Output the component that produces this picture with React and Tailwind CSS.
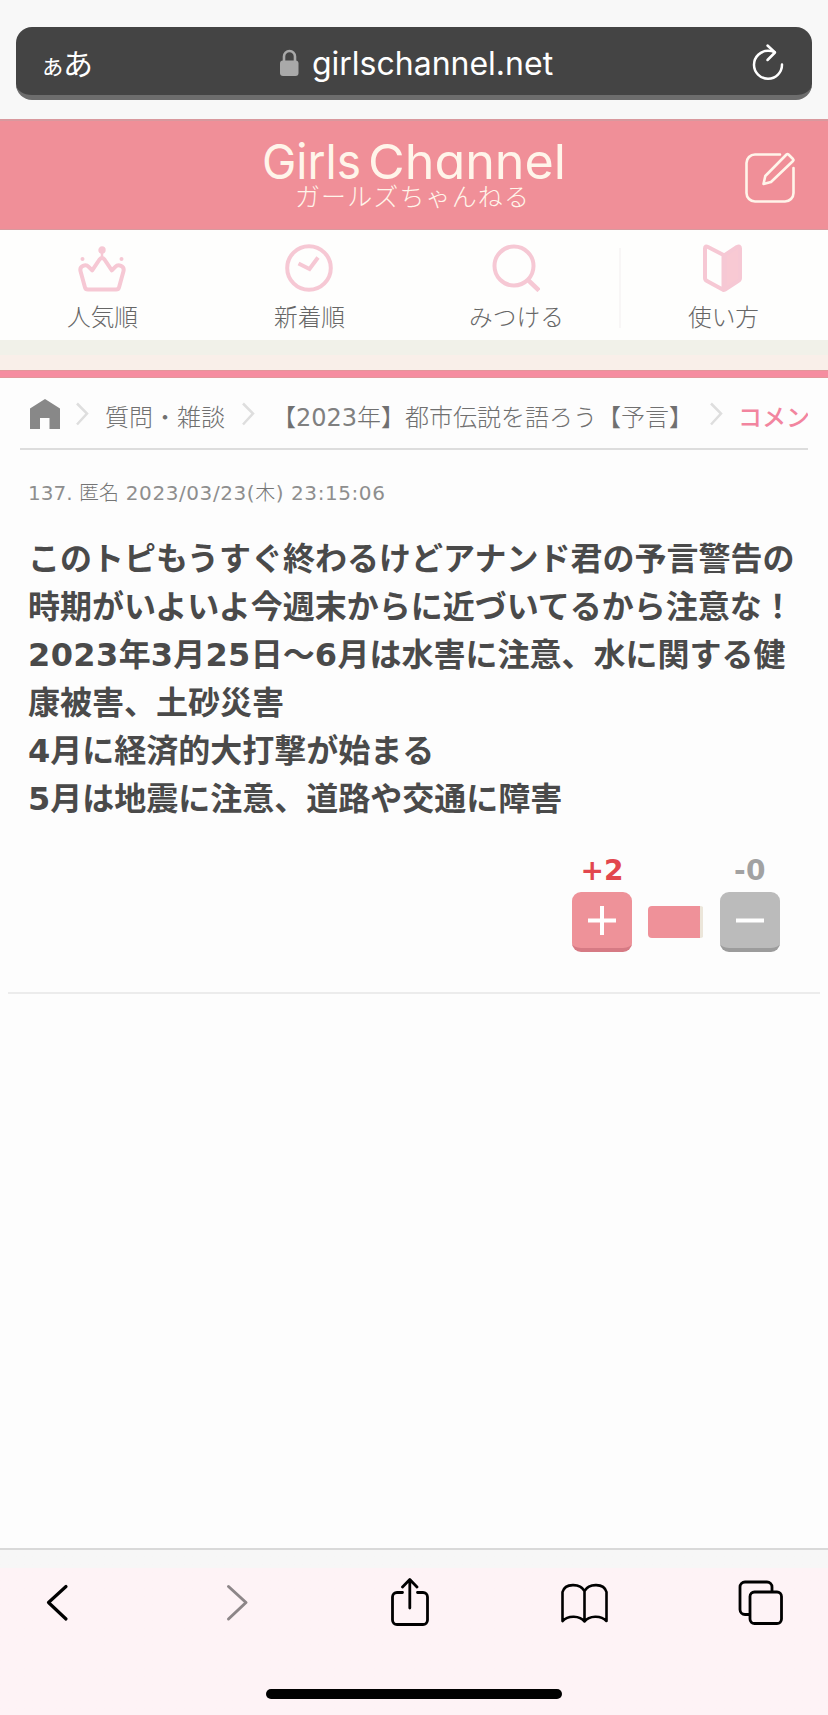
import React from "react";

const JP = "font-['Noto_Sans_CJK_JP',sans-serif]";
const VERDANA = "font-['DejaVu_Sans','Noto_Sans_CJK_JP',sans-serif]";

function AddressBar() {
  return (
    <div className="flex h-[119px] shrink-0 flex-col bg-[#f8f8f8] px-4 pt-[27px]">
      <div className="flex h-[73px] items-center justify-between rounded-2xl border-b-[5px] border-[#6d6d6d] bg-[#444444] pl-[24px] pr-[28px] text-white">
        <div className={`flex w-[120px] items-baseline pt-[2px] leading-none ${JP}`}>
          <span className="text-[25px]">ぁ</span>
          <span className="-ml-[2px] text-[30px]">あ</span>
        </div>
        <div className="flex items-center gap-[13px] pl-[9px] pt-[6px]">
          <svg width="19" height="27" viewBox="0 0 19 27" className="mb-[4px]">
            <path d="M4 13V7.5a5.5 5.5 0 0 1 11 0V13" fill="none" stroke="#a9a9a9" strokeWidth="2.6" />
            <rect x="0" y="11.5" width="18.5" height="15.5" rx="3" fill="#a9a9a9" />
          </svg>
          <span className="font-['Inter',sans-serif] text-[32px] leading-[40px]">girlschannel.net</span>
        </div>
        <div className="flex w-[120px] justify-end pt-[2px]">
          <svg width="32" height="38" viewBox="0 0 32 38" fill="none" stroke="#fff" strokeWidth="2.500" strokeLinecap="round" strokeLinejoin="round">
            <path d="M22.500 9.200C20.500 8.200 18.400 7.800 16.300 7.800A14 14 0 1 0 30 21.600" />
            <path d="M15.500 2.500L23 9.500L15.500 17" />
          </svg>
        </div>
      </div>
    </div>
  );
}

function SiteHeader() {
  return (
    <header className="flex h-[111px] shrink-0 items-start justify-between border-t-2 border-b border-[#d9999e] bg-[#f08f98] pl-[32px] pr-[32px]">
      <div className="w-[51px]" />
      <svg width="310" height="104" viewBox="259 121 310 104" fill="#fff5ea">
        <g fontFamily="Inter, sans-serif" fontSize="48.500" fontWeight="400" style={{ fontFeatureSettings: '"cv11"' }}>
          <text x="262" y="178.500" textLength="99" lengthAdjust="spacingAndGlyphs">Girls</text>
          <text x="368" y="178.500" textLength="198" lengthAdjust="spacingAndGlyphs">Channel</text>
        </g>
        <text x="295" y="206" fontFamily="'Noto Sans CJK JP', sans-serif" fontSize="25" fontWeight="300" textLength="234">
          ガールズちゃんねる
        </text>
      </svg>
      <svg width="51" height="51" viewBox="0 0 51 51" className="mt-[31px]" fill="none" stroke="#fff5ea" strokeWidth="2.600" strokeLinecap="round" strokeLinejoin="round">
        <path d="M35 2.500H10a8.500 8.500 0 0 0-8.500 8.500v30a8.500 8.500 0 0 0 8.500 8.500h30a8.500 8.500 0 0 0 8.500-8.500V16" />
        <path d="M43.500 2.500l4.500 4.500a1.500 1.500 0 0 1 0 2L26 30l-7.500 2 1.800-8L41.500 2.500a1.500 1.500 0 0 1 2 0z" />
      </svg>
    </header>
  );
}

const navItems = [
  {
    label: "人気順",
    icon: (
      <g fill="none" stroke="#f6c8d4" strokeWidth="4" strokeLinejoin="round">
        <path d="M10 45.500Q7.500 45.500 7 43.500L2.600 27.500C1 21.500 8 20 10.700 22.800L14.200 26.300L21.500 15.500Q24 12.500 26.500 15.500L33.800 26.300L37.300 22.800C40 20 47 21.500 45.400 27.500L41 43.500Q40.500 45.500 38 45.500Z" />
        <path d="M24 5v9" strokeWidth="2.500" />
        <circle cx="24" cy="6" r="2" strokeWidth="3.400" />
        <circle cx="4.500" cy="15" r="1" strokeWidth="2" />
        <circle cx="43.500" cy="15" r="1" strokeWidth="2" />
      </g>
    ),
  },
  {
    label: "新着順",
    icon: (
      <g fill="none" stroke="#f6c8d4" strokeWidth="4">
        <circle cx="24" cy="24" r="21.800" />
        <path d="M13.500 19.500L24.500 25L33 13.500" />
      </g>
    ),
  },
  {
    label: "みつける",
    icon: (
      <g fill="none" stroke="#f6c8d4" strokeWidth="4">
        <circle cx="22" cy="22" r="19.500" />
        <path d="M35.500 35.500L47 46.500" strokeWidth="4.500" />
      </g>
    ),
  },
  {
    label: "使い方",
    icon: (
      <g stroke="#f6c8d4" strokeWidth="4" strokeLinejoin="round">
        <path d="M6 4.500Q6 1.500 9 3L24.500 11V46L8 37Q6 36 6 34Z" fill="none" />
        <path d="M41 4.500Q41 1.500 38 3L26 11V45.500L39 37Q41 36 41 34Z" fill="#f8c9d3" />
      </g>
    ),
  },
];

function Nav() {
  return (
    <nav className="grid h-[110px] shrink-0 grid-cols-4 bg-[#fefefd]">
      {navItems.map((item, i) => (
        <div key={item.label} className="flex">
          {i === 3 && <div className="-ml-[2px] mt-[18px] h-[80px] w-[2px] bg-[#f8f6f6]" />}
          <div className="flex flex-1 flex-col items-center pr-[3px] pt-[14px]">
            <svg width="48" height="48" viewBox="0 0 48 48">{item.icon}</svg>
            <span className={`mt-[6px] pl-px text-[23.7px] leading-[36px] font-light text-[#666666] ${JP}`}>{item.label}</span>
          </div>
        </div>
      ))}
    </nav>
  );
}

function Chevron() {
  return (
    <svg width="14" height="26" viewBox="0 0 14 26" className="shrink-0" fill="none" stroke="#dedede" strokeWidth="2.500">
      <path d="M2 2.500L12 12.500L2 23.500" />
    </svg>
  );
}

function Breadcrumb() {
  return (
    <div className={`mx-5 flex h-[72px] shrink-0 items-start overflow-hidden whitespace-nowrap border-b-2 border-[#dddddd] pl-[10px] pt-[20px] text-[24px] leading-[36px] font-light text-[#707070] ${VERDANA}`}>
      <svg width="30" height="30" viewBox="0 0 30 30" className="mt-px shrink-0" fill="#888888">
        <path d="M15 0L30 9.500V30H19.500V19H10V30H0V9.500Z" />
      </svg>
      <div className="ml-[15px] mt-[3px]"><Chevron /></div>
      <span className="ml-[16px] mt-[2px]">質問・雑談</span>
      <div className="ml-[16px] mt-[3px]"><Chevron /></div>
      <span className="ml-[17px] mt-[2px]">【<span className="font-normal text-[#808080]">2023</span>年】都市伝説を語ろう【予言】</span>
      <div className="ml-[16px] mt-[3px]"><Chevron /></div>
      <span className="ml-[15px] mt-[2px] font-medium text-[#f2859f]">コメント</span>
    </div>
  );
}

function Num({ children }) {
  return <span className="tracking-[0.4px]">{children}</span>;
}

function Comment() {
  return (
    <article className="mx-2 flex h-[544px] shrink-0 flex-col border-b-2 border-[#ececec] px-5">
      <div className={`mt-[28px] h-[30px] whitespace-nowrap text-[20px] leading-[30px] tracking-[0.570px] text-[#8e8e8e] ${VERDANA}`}>
        <span className="tracking-normal">137. </span><span className="font-light tracking-normal text-[#757575]">匿名</span> 2023/03/23(<span className="font-light text-[#757575]">木</span>) 23:15:06
      </div>
      <div className={`mt-[27px] whitespace-nowrap text-[32px] leading-[48px] font-bold text-[#4a4a4a] ${VERDANA}`}>
        <p>このトピもうすぐ終わるけどアナンド君の予言警告の</p>
        <p>時期がいよいよ今週末からに近づいてるから注意な！</p>
        <p><Num>2023</Num>年<Num>3</Num>月<Num>25</Num>日〜<Num>6</Num>月は水害に注意、水に関する健</p>
        <p>康被害、土砂災害</p>
        <p>4月に経済的大打撃が始まる</p>
        <p>5月は地震に注意、道路や交通に障害</p>
      </div>
      <div className="mt-[29px] flex items-end justify-end gap-[16px] pr-[20px]">
        <div className="flex w-[60px] flex-col items-center">
          <span className={`pt-px text-[28px] leading-[36px] font-bold text-[#e2474e] ${VERDANA}`}>+2</span>
          <div className="mt-[3px] flex h-[60px] w-[60px] justify-center rounded-[9px] border-b-4 border-[#d67a84] bg-[#ee9299] pt-[14px]">
            <svg width="30" height="30" viewBox="0 0 30 30" stroke="#fff" strokeWidth="4"><path d="M1 14.500H29M15 0V29" /></svg>
          </div>
        </div>
        <div className="mb-[14px] flex h-[32px] w-[56px] overflow-hidden rounded-[4px]">
          <div className="w-[52px] bg-[#ef9199]" />
          <div className="w-[3px] bg-[#ece6da]" />
        </div>
        <div className="flex w-[60px] flex-col items-center">
          <span className={`pt-px text-[28px] leading-[36px] font-bold tracking-[0.500px] text-[#a2a2a2] ${VERDANA}`}>-0</span>
          <div className="mt-[3px] flex h-[60px] w-[60px] justify-center rounded-[9px] border-b-4 border-[#9c9c9c] bg-[#bbbbbb] pt-[14px]">
            <svg width="30" height="30" viewBox="0 0 30 30" stroke="#fff" strokeWidth="4"><path d="M1 14.500H29" /></svg>
          </div>
        </div>
      </div>
    </article>
  );
}

function Toolbar() {
  return (
    <footer className="flex h-[167px] shrink-0 flex-col border-t-2 border-[#d9d9d9] bg-linear-to-b from-[#f7f7f7] from-[18px] to-[#fef3f6] to-[18px]">
      <div className="flex h-[110px] items-start pl-[46px] pt-[28px]">
        <svg width="24" height="52" viewBox="46 1578 24 52" fill="none" stroke="#000" strokeWidth="3.200" strokeLinecap="round" strokeLinejoin="round">
          <path d="M66 1586.500L48.500 1602.500L66 1619" />
        </svg>
        <svg width="24" height="52" viewBox="225 1578 24 52" className="ml-[155px]" fill="none" stroke="#8d8688" strokeWidth="3" strokeLinecap="round" strokeLinejoin="round">
          <path d="M228.500 1586.500L246 1602.500L228.500 1619" />
        </svg>
        <svg width="40" height="52" viewBox="390 1578 40 52" className="ml-[141px]" fill="none" stroke="#000" strokeWidth="2.800" strokeLinecap="round" strokeLinejoin="round">
          <path d="M402.500 1592.500H397a4.500 4.500 0 0 0-4.500 4.500v23a4.500 4.500 0 0 0 4.500 4.500h26a4.500 4.500 0 0 0 4.500-4.500v-23a4.500 4.500 0 0 0-4.500-4.500H417.500M409.800 1608V1580M402.500 1587L409.800 1579.500L417 1587" />
        </svg>
        <svg width="50" height="52" viewBox="560 1578 50 52" className="ml-[130px]" fill="none" stroke="#000" strokeWidth="2.600" strokeLinejoin="round">
          <path d="M562.500 1621V1592C565 1583 580 1583 584.500 1591C589 1583 604 1583 606.500 1592V1621C601 1615 589 1615.500 584.500 1621.500C580 1615.500 568 1615 562.500 1621ZM584.500 1591V1621" />
        </svg>
        <svg width="46" height="52" viewBox="738 1578 46 52" className="ml-[128px]" fill="none" stroke="#000" strokeWidth="2.800">
          <path d="M749 1614.500H745a5 5 0 0 1-5-5v-22.500a5 5 0 0 1 5-5h22a5 5 0 0 1 5 5v4" />
          <rect x="750" y="1592" width="31.500" height="31.500" rx="4.500" />
        </svg>
      </div>
      <div className="ml-[266px] mt-[29px] h-[10px] w-[296px] rounded-full bg-black" />
    </footer>
  );
}

export default function App() {
  return (
    <div className="flex h-[1715px] w-[828px] flex-col overflow-hidden bg-[#fdfdfd]">
      <AddressBar />
      <SiteHeader />
      <Nav />
      <div className="h-[15px] shrink-0 bg-[#f1f1e9]" />
      <div className="h-[15px] shrink-0 bg-[#f9efe9]" />
      <div className="h-[8px] shrink-0 border-y border-[#e3969a] bg-[#f58da0]" />
      <Breadcrumb />
      <Comment />
      <div className="flex-1" />
      <Toolbar />
    </div>
  );
}
